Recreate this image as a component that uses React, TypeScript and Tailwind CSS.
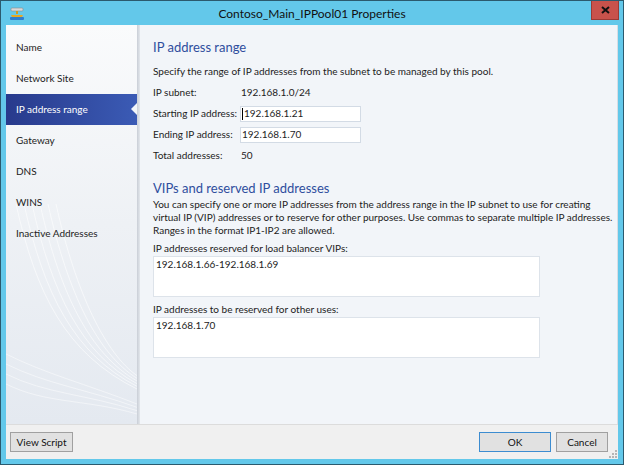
import React from "react";

const navItems = [
  "Name",
  "Network Site",
  "IP address range",
  "Gateway",
  "DNS",
  "WINS",
  "Inactive Addresses",
];

const font = { fontFamily: 'Lato, "Open Sans", sans-serif' };

const PoolIcon: React.FC = () => (
  <svg width="16" height="14" viewBox="0 0 16 14">
    <rect x="2" y="1" width="12" height="3" rx="1" fill="#d9d9d9" stroke="#8a8a8a" strokeWidth="0.6" />
    <rect x="7" y="4" width="2" height="3" fill="#d39a1e" />
    <path d="M2 8 L14 8 L13 10 L3 10 Z" fill="#e7a923" />
    <rect x="1" y="10" width="14" height="3" rx="1" fill="#2e7fd0" />
  </svg>
);

const SidebarArt: React.FC = () => (
  <svg className="absolute bottom-0 left-0" width="131" height="220" viewBox="0 0 131 220">
    {[0, 8, 16, 24, 32, 40].map((d) => (
      <path
        key={d}
        d={`M${10 + d} 0 C ${30 + d} 90, ${60 + d} 150, 131 ${185 - d / 3}`}
        stroke="#ffffff"
        strokeOpacity="0.7"
        strokeWidth="0.8"
        fill="none"
      />
    ))}
    {[0, 10, 20, 30].map((d) => (
      <path
        key={d}
        d={`M0 ${150 + d} C 40 ${170 + d}, 80 ${180 + d / 2}, 131 ${200 + d / 3}`}
        stroke="#ffffff"
        strokeOpacity="0.6"
        strokeWidth="0.8"
        fill="none"
      />
    ))}
  </svg>
);

const TextInput: React.FC<{ value: string; caret?: boolean }> = ({ value, caret }) => (
  <div className="w-[121px] h-[16px] bg-white border border-[#d3dbe5] flex items-center pl-[1px] text-[#1e1e1e]">
    {caret && <span className="w-px h-[12px] bg-black mr-[1px]" />}
    {value}
  </div>
);

const Row: React.FC<{ label: string; children: React.ReactNode }> = ({ label, children }) => (
  <div className="flex items-center h-[21px]">
    <span className="w-[87px] shrink-0 whitespace-nowrap">{label}</span>
    {children}
  </div>
);

const App: React.FC = () => {
  return (
    <div
      className="w-[624px] h-[465px] bg-[#63c8ea] border border-[#2b5a6e] flex flex-col overflow-hidden text-[10px] text-[#222]"
      style={font}
    >
      {/* title bar */}
      <div className="h-[24px] grid grid-cols-[48px_1fr_48px] items-center shrink-0">
        <div className="pl-[8px] pt-[2px]">
          <PoolIcon />
        </div>
        <div className="text-center text-[12px] text-[#111] leading-none pt-[2px]">
          Contoso_Main_IPPool01 Properties
        </div>
        <div className="flex justify-end self-start pr-[4px]">
          <div className="w-[28px] h-[19px] bg-[#c8524b] border border-[#9a3a35] border-t-0 flex items-center justify-center">
            <svg width="9" height="8" viewBox="0 0 9 8">
              <path d="M1 1 L8 7 M8 1 L1 7" stroke="#111" strokeWidth="2" />
            </svg>
          </div>
        </div>
      </div>

      {/* window body */}
      <div className="flex-1 mx-[5px] mb-[5px] flex flex-col bg-[#f0f0f0]">
        <div className="flex-1 flex min-h-0">
          {/* sidebar */}
          <div className="relative w-[131px] shrink-0 bg-gradient-to-b from-[#fafbfc] via-[#eef1f5] to-[#e4e9f0] pt-[7px]">
            <SidebarArt />
            <div className="relative flex flex-col">
              {navItems.map((item) =>
                item === "IP address range" ? (
                  <div
                    key={item}
                    className="relative h-[31px] flex items-center pl-[10px] text-white bg-gradient-to-r from-[#283a8c] to-[#3b5bb5]"
                  >
                    {item}
                    <span className="absolute right-0 top-[9px] w-0 h-0 border-y-[6px] border-y-transparent border-r-[6px] border-r-[#f2f5f9]" />
                  </div>
                ) : (
                  <div key={item} className="h-[31px] flex items-center pl-[10px]">
                    {item}
                  </div>
                )
              )}
            </div>
          </div>
          <div className="w-[3px] shrink-0 bg-gradient-to-r from-[#c9ced6] to-[#e3e7ec]" />

          {/* main panel */}
          <div className="flex-1 bg-[#f2f5f9] pl-[13px] pt-[12px] border-r border-[#d8dde4]">
            <h2 className="text-[13px] text-[#2f4e9e] leading-[20px]">IP address range</h2>
            <p className="mt-[7px] leading-[14px] whitespace-nowrap">
              Specify the range of IP addresses from the subnet to be managed by this pool.
            </p>
            <div className="mt-[4px] flex flex-col">
              <Row label="IP subnet:">
                <span className="pl-[1px]">192.168.1.0/24</span>
              </Row>
              <Row label="Starting IP address:">
                <TextInput value="192.168.1.21" caret />
              </Row>
              <Row label="Ending IP address:">
                <TextInput value="192.168.1.70" />
              </Row>
              <Row label="Total addresses:">
                <span className="pl-[1px]">50</span>
              </Row>
            </div>

            <h2 className="mt-[12px] text-[13px] text-[#2f4e9e] leading-[20px]">
              VIPs and reserved IP addresses
            </h2>
            <p className="leading-[13px] whitespace-nowrap">
              You can specify one or more IP addresses from the address range in the IP subnet to use for creating
              <br />
              virtual IP (VIP) addresses or to reserve for other purposes. Use commas to separate multiple IP addresses.
              <br />
              Ranges in the format IP1-IP2 are allowed.
            </p>
            <div className="mt-[4px] leading-[14px]">IP addresses reserved for load balancer VIPs:</div>
            <div className="mt-[1px] w-[387px] h-[41px] bg-white border border-[#dde3ea] px-[2px] leading-[14px]">
              192.168.1.66-192.168.1.69
            </div>
            <div className="mt-[5px] leading-[14px]">IP addresses to be reserved for other uses:</div>
            <div className="mt-[1px] w-[387px] h-[41px] bg-white border border-[#dde3ea] px-[2px] leading-[14px]">
              192.168.1.70
            </div>
          </div>
        </div>

        {/* footer */}
        <div className="relative h-[35px] shrink-0 border-t border-[#dcdcdc] flex items-center px-[4px]">
          <button className="w-[63px] h-[20px] bg-[#e1e1e1] border border-[#a0a0a0] text-[10px] text-[#111]">
            View Script
          </button>
          <div className="flex-1" />
          <button className="w-[72px] h-[20px] bg-[#e1e1e1] border border-[#3c8cd0] text-[10px] text-[#111]">
            OK
          </button>
          <button className="ml-[5px] mr-[6px] w-[52px] h-[20px] bg-[#e1e1e1] border border-[#a0a0a0] text-[10px] text-[#111]">
            Cancel
          </button>
          <svg className="absolute right-[1px] bottom-[1px]" width="8" height="8" viewBox="0 0 8 8">
            {[
              [6, 0],
              [6, 3],
              [3, 3],
              [6, 6],
              [3, 6],
              [0, 6],
            ].map(([x, y]) => (
              <rect key={`${x}-${y}`} x={x} y={y} width="2" height="2" fill="#b5b5b5" />
            ))}
          </svg>
        </div>
      </div>
    </div>
  );
};

export default App;
